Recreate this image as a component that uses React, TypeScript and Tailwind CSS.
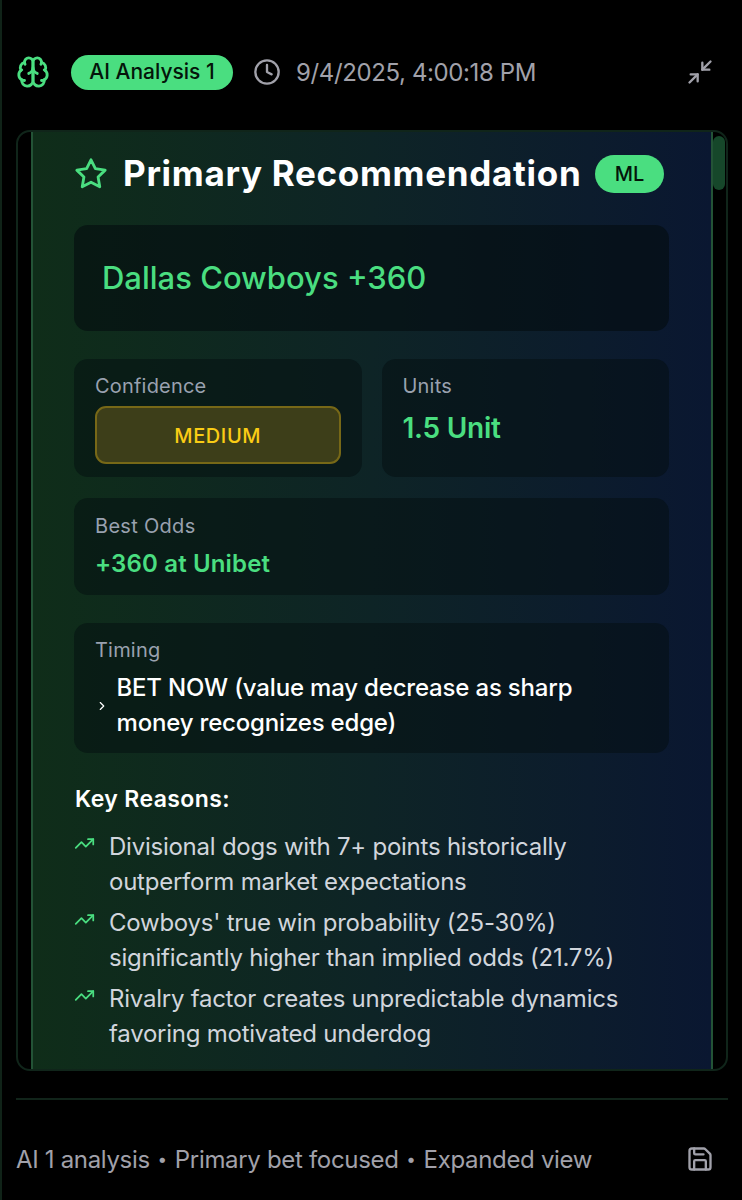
import { ChevronRight, Clock, Minimize2, Save, TrendingUp } from "lucide-react"

const reasons = [
    ["Divisional dogs with 7+ points historically", "outperform market expectations"],
    ["Cowboys' true win probability (25-30%)", "significantly higher than implied odds (21.7%)"],
    ["Rivalry factor creates unpredictable dynamics", "favoring motivated underdog"],
]

function BrainIcon({ className }: { className?: string }) {
    return (
        <svg viewBox="0 0 24 24" fill="none" stroke="currentColor" strokeWidth="2" strokeLinecap="round" strokeLinejoin="round" className={className}>
            <path d="M12 5a3 3 0 1 0-5.997.125 4 4 0 0 0-2.526 5.77 4 4 0 0 0 .556 6.588A4 4 0 1 0 12 18Z" />
            <path d="M12 5a3 3 0 1 1 5.997.125 4 4 0 0 1 2.526 5.77 4 4 0 0 1-.556 6.588A4 4 0 1 1 12 18Z" />
            <path d="M15 13a4.5 4.5 0 0 1-3-4 4.5 4.5 0 0 1-3 4" />
            <path d="M17.599 6.5a3 3 0 0 0 .399-1.375" />
            <path d="M6.003 5.125A3 3 0 0 0 6.401 6.5" />
            <path d="M3.477 10.896a4 4 0 0 1 .585-.396" />
            <path d="M19.938 10.5a4 4 0 0 1 .585.396" />
            <path d="M6 18a4 4 0 0 1-1.967-.516" />
            <path d="M19.967 17.484A4 4 0 0 1 18 18" />
        </svg>
    )
}

function StarIcon({ className }: { className?: string }) {
    return (
        <svg viewBox="0 0 24 24" fill="none" stroke="currentColor" strokeWidth="2" strokeLinecap="round" strokeLinejoin="round" className={className}>
            <polygon points="12 2 15.09 8.26 22 9.27 17 14.14 18.18 21.02 12 17.77 5.82 21.02 7 14.14 2 9.27 8.91 8.26 12 2" />
        </svg>
    )
}

function Dot() {
    return <span className="w-[25px] text-center text-[17px] tracking-normal">•</span>
}

export default function App() {
    return (
        <div className="flex h-[1200px] w-[742px] flex-col overflow-hidden border-l-2 border-[#102318] bg-black pr-[14px] pl-[14px] font-['Inter',sans-serif]">
            <header className="flex h-[130px] shrink-0 items-center pt-[14px]">
                <BrainIcon className="size-[34px] text-[#4ade80]" />
                <span className="ml-[21px] flex h-[35px] w-[162px] items-center justify-center rounded-full bg-[#4ade80] text-[21px] font-medium text-[#04150a]">
                    <span className="whitespace-nowrap">AI Analysis 1</span>
                </span>
                <Clock className="ml-[20px] size-7 text-[#a1a1aa]" />
                <span className="ml-[15px] pt-px text-[24px] tracking-[-0.38px] whitespace-nowrap text-[#a1a1aa]">9/4/2025, 4:00:18 PM</span>
                <Minimize2 className="mr-[14px] ml-auto size-7 text-[#a1a1aa]" />
            </header>

            <main className="flex h-[941px] shrink-0 overflow-hidden rounded-[14px] border-2 border-[#10251a] pl-[13px]">
                <section className="flex w-[682px] shrink-0 flex-col border-x-2 border-[#235336] bg-[linear-gradient(90deg,#0f2d19,#0e2426_50%,#0c1c2d_82%,#0a1731)] pr-[42px] pl-[41px]">
                    <div className="flex h-[93px] shrink-0 items-center pb-[10px]">
                        <StarIcon className="size-[34px] shrink-0 text-[#4ade80]" />
                        <h1 className="ml-[15px] w-[459px] text-[35px] font-bold tracking-[0.7px] whitespace-nowrap text-white">Primary Recommendation</h1>
                        <span className="ml-[13px] flex h-[38px] w-[69px] shrink-0 items-center justify-center rounded-full bg-[#4ade80] text-[20px] font-medium text-[#04150a]">ML</span>
                    </div>

                    <div className="flex h-[105.5px] shrink-0 items-center rounded-[14px] bg-[#040c0f]/60 px-[28px] pt-px text-[31px] font-medium text-[#4ade80]">
                        Dallas Cowboys +360
                    </div>

                    <div className="mt-[28px] grid h-[118.5px] shrink-0 grid-cols-2 gap-[20px]">
                        <div className="rounded-[14px] bg-[#040d10]/50 px-[21px] pt-[13px]">
                            <div className="text-[20px] leading-[28px] tracking-[0.2px] text-[#99a1af]">Confidence</div>
                            <div className="mt-[6.5px] flex h-[57.5px] items-center justify-center rounded-[11px] border-2 border-[#776817] bg-[#3d3e19] pt-[2px] text-[20px] font-medium tracking-[0.6px] text-[#facc15]">MEDIUM</div>
                        </div>
                        <div className="rounded-[14px] bg-[#040d10]/50 px-[21px] pt-[13px]">
                            <div className="text-[20px] leading-[28px] tracking-[0.2px] text-[#99a1af]">Units</div>
                            <div className="mt-[10px] text-[28px] leading-[36px] font-semibold tracking-[-0.25px] text-[#4ade80]">1.5 Unit</div>
                        </div>
                    </div>

                    <div className="mt-[21px] h-[96.5px] shrink-0 rounded-[14px] bg-[#040d10]/50 px-[21px] pt-[13.5px]">
                        <div className="text-[20px] leading-[28px] tracking-[0.3px] text-[#99a1af]">Best Odds</div>
                        <div className="mt-[7.5px] text-[24px] leading-[34px] font-semibold tracking-[0.15px] text-[#4ade80]">+360 at Unibet</div>
                    </div>

                    <div className="mt-[28px] h-[130.5px] shrink-0 rounded-[14px] bg-[#040d10]/50 px-[21px] pt-[13px]">
                        <div className="text-[20px] leading-[28px] tracking-[0.2px] text-[#99a1af]">Timing</div>
                        <div className="mt-[7.5px] flex items-center">
                            <ChevronRight className="size-[14px] shrink-0 text-white" />
                            <div className="ml-[7.5px] text-[24px] leading-[34.5px] font-medium tracking-[-0.18px] whitespace-nowrap text-white">
                                <div>BET NOW (value may decrease as sharp</div>
                                <div>money recognizes edge)</div>
                            </div>
                        </div>
                    </div>

                    <h2 className="mt-[29px] ml-px text-[23px] leading-[34px] font-semibold tracking-[0.4px] text-white">Key Reasons:</h2>
                    <ul className="mt-[14px] space-y-[7px]">
                        {reasons.map(([first, second]) => (
                            <li key={first} className="flex">
                                <TrendingUp className="mt-[2.5px] size-[21px] shrink-0 text-[#4ade80]" />
                                <div className="ml-[14px] text-[24px] leading-[34.5px] tracking-[-0.24px] whitespace-nowrap text-[#d1d5dc]">
                                    <div>{first}</div>
                                    <div>{second}</div>
                                </div>
                            </li>
                        ))}
                    </ul>
                </section>
                <div className="mt-[4px] h-[54px] w-[12px] shrink-0 rounded-full bg-[#16472a]" />
            </main>

            <footer className="mt-[27px] flex h-[102px] shrink-0 items-center border-t-2 border-[#11241a] pt-[18px] text-[24px] text-[#a1a1aa]">
                <p className="flex items-center pt-px tracking-[-0.32px] whitespace-nowrap">
                    <span>AI 1 analysis</span>
                    <Dot />
                    <span>Primary bet focused</span>
                    <Dot />
                    <span>Expanded view</span>
                </p>
                <Save className="mr-[14px] ml-auto size-7" />
            </footer>
        </div>
    )
}
